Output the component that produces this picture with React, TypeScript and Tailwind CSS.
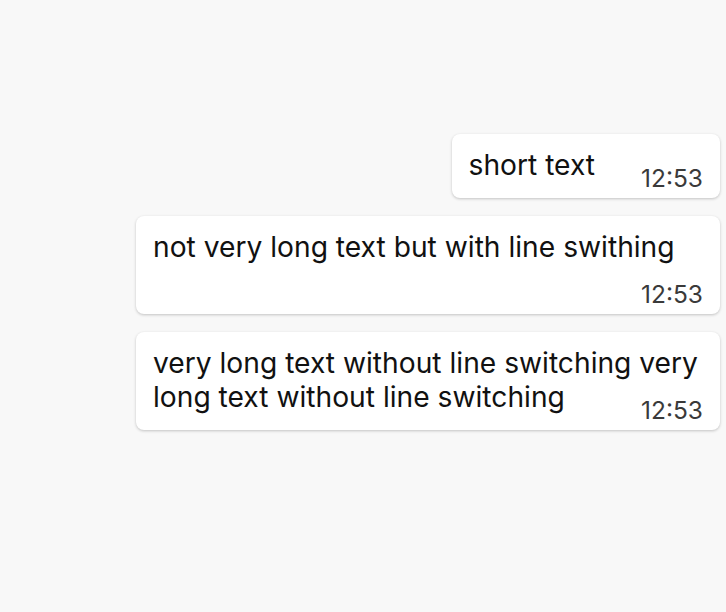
import React from "react";

const Bubble = ({ text }: { text: string }) => (
  <div className="relative max-w-[584px] rounded-[8px] bg-white pb-[16px] pl-[17px] pr-[17px] pt-[14px] shadow-[0_1px_3px_rgba(0,0,0,0.22)]">
    <span className="text-[28.2px] leading-[34px] text-[#111]">
      {text}{" "}
      <span className="inline-block h-[1px] w-[100px]" />
    </span>
    <span className="absolute bottom-[10px] right-[17px] text-[24.5px] leading-[20px] text-[#3a3a3a]">
      12:53
    </span>
  </div>
);

export default function App() {
  return (
    <div
      className="flex h-[612px] w-full flex-col items-end gap-[18px] bg-[#f8f8f8] pr-[6px] pt-[134px]"
      style={{ fontFamily: "Inter, sans-serif" }}
    >
      <Bubble text="short text" />
      <Bubble text="not very long text but with line swithing" />
      <Bubble text="very long text without line switching very long text without line switching" />
    </div>
  );
}
